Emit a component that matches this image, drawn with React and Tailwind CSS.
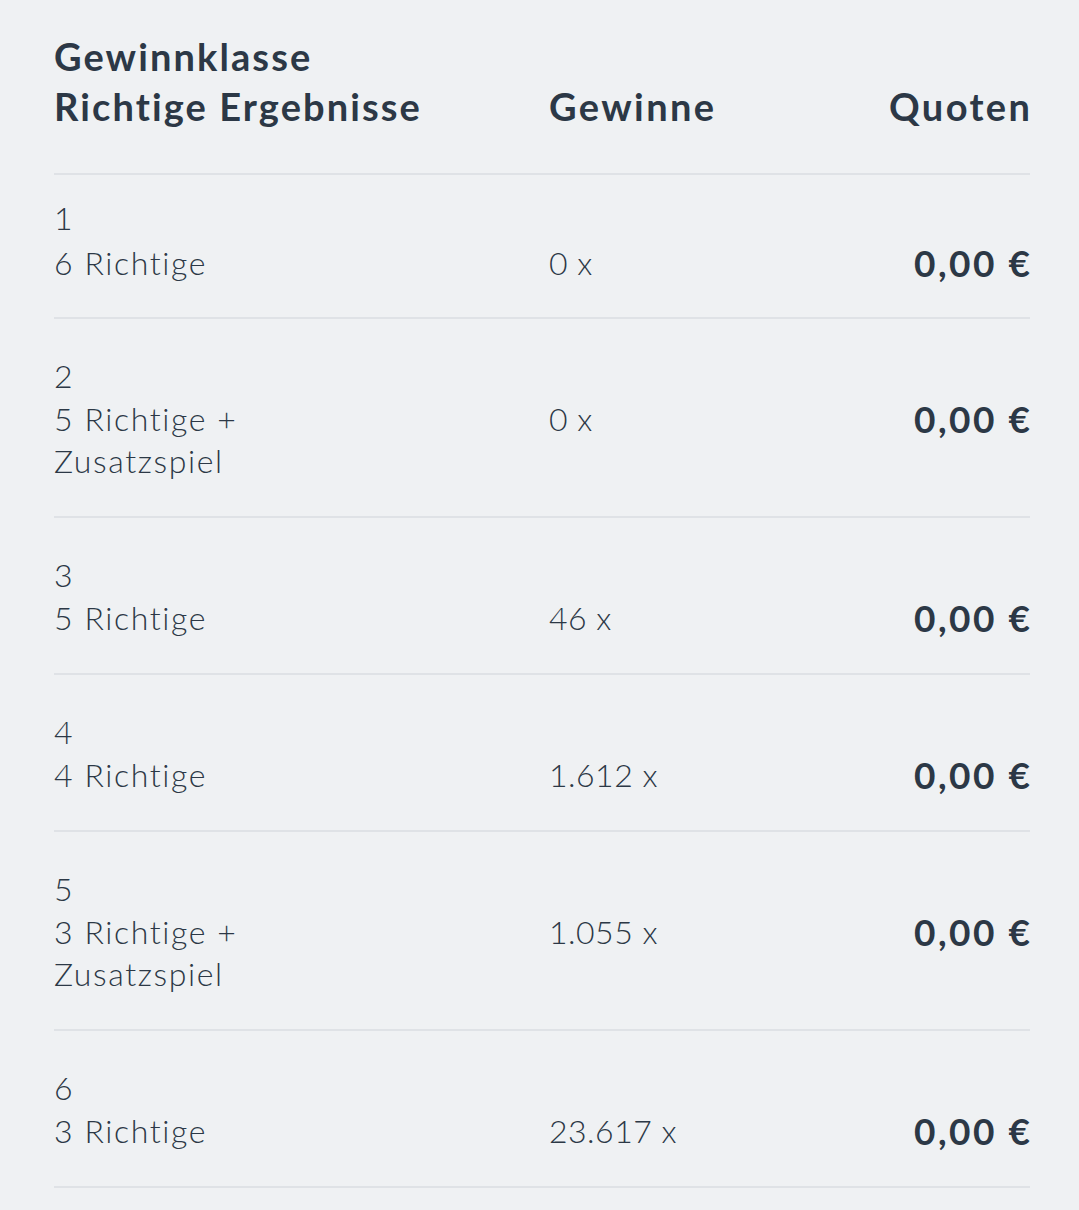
import React from 'react';

const rows = [
    { klasse: '1', richtige: ['6 Richtige'], gewinne: '0 x', quote: '0,00 €' },
    { klasse: '2', richtige: ['5 Richtige +', 'Zusatzspiel'], gewinne: '0 x', quote: '0,00 €' },
    { klasse: '3', richtige: ['5 Richtige'], gewinne: '46 x', quote: '0,00 €' },
    { klasse: '4', richtige: ['4 Richtige'], gewinne: '1.612 x', quote: '0,00 €' },
    { klasse: '5', richtige: ['3 Richtige +', 'Zusatzspiel'], gewinne: '1.055 x', quote: '0,00 €' },
    { klasse: '6', richtige: ['3 Richtige'], gewinne: '23.617 x', quote: '0,00 €' },
];

const App = () => {
    return (
        <div className="min-h-[1210px] bg-[#eff1f3] pl-[54px] pr-[49px] text-[#2c3846] font-['Lato','Noto_Sans',sans-serif] [font-variant-ligatures:none]">
            <div className="grid grid-cols-[495px_1fr_auto] border-b-2 border-[#dfe2e6] pt-[31px] pb-[42px] text-[38px] leading-[50px] tracking-[2.1px] font-bold">
                <div>
                    <div>Gewinnklasse</div>
                    <div>Richtige Ergebnisse</div>
                </div>
                <div className="self-end tracking-[2.4px]">Gewinne</div>
                <div className="self-end text-right tracking-[2.4px] -mr-[2.4px]">Quoten</div>
            </div>
            {rows.map((row, i) => {
                const first = i === 0;
                return (
                    <div
                        key={row.klasse}
                        className={`grid grid-cols-[495px_1fr_auto] border-b-2 border-[#dfe2e6] text-[32px] leading-[42px] font-light ${first ? 'pt-[19px] pb-[33px]' : 'pt-[34px] pb-[34px]'}`}
                    >
                        <div className="tracking-[1.6px]">
                            <div className={first ? 'leading-[48px]' : 'leading-[45px]'}>{row.klasse}</div>
                            {row.richtige.map((line) => (
                                <div key={line}>{line}</div>
                            ))}
                        </div>
                        <div className={`tracking-[0.5px] ${first ? 'pt-[48px]' : 'pt-[45px]'}`}>{row.gewinne}</div>
                        <div className={`text-right text-[37px] font-bold tracking-[2.5px] -mr-[2.5px] ${first ? 'pt-[48px]' : 'pt-[45px]'}`}>{row.quote}</div>
                    </div>
                );
            })}
        </div>
    );
};

export default App;
